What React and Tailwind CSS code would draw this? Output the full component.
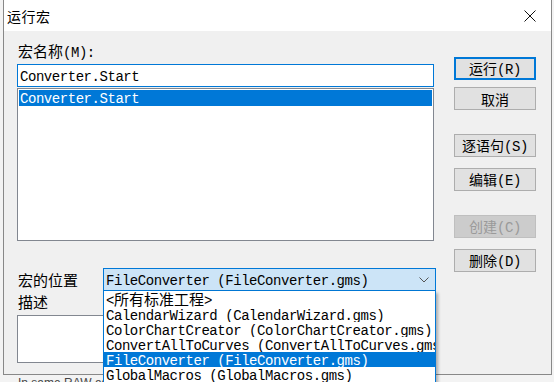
import React from "react";

const CJK_TEST = /[\u2E80-\u9FFF\u3000-\u303F\uFF00-\uFFEF]/;
const CJK_SPLIT = /([\u2E80-\u9FFF\u3000-\u303F\uFF00-\uFFEF]+)/;

function Mixed({ text, big }) {
  const parts = text.split(CJK_SPLIT).filter(Boolean);
  return (
    <span className="leading-[16px] whitespace-pre">
      {parts.map((p, i) =>
        CJK_TEST.test(p) ? (
          <span
            key={i}
            className={
              big
                ? "font-['Noto_Sans_CJK_SC',sans-serif] text-[15px]"
                : "font-['Noto_Sans_CJK_SC',sans-serif] text-[14px]"
            }
          >
            {p}
          </span>
        ) : (
          <span
            key={i}
            className="font-['Liberation_Mono','Noto_Sans_CJK_SC',monospace] text-[14px] tracking-[-0.45px]"
          >
            {p}
          </span>
        )
      )}
    </span>
  );
}

function Btn({ label, mt, primary, disabled }) {
  let cls =
    "w-[82px] h-[23px] flex items-center justify-center shrink-0 ";
  if (primary) cls += "border-2 border-[#0078d7] bg-[#e1e1e1] text-black";
  else if (disabled) cls += "border border-[#bfbfbf] bg-[#cccccc] text-[#9a9a9a]";
  else cls += "border border-[#adadad] bg-[#e1e1e1] text-black";
  return (
    <div className={cls + " " + mt}>
      <Mixed text={label} />
    </div>
  );
}

const items = [
  { t: "<所有标准工程>" },
  { t: "CalendarWizard (CalendarWizard.gms)" },
  { t: "ColorChartCreator (ColorChartCreator.gms)" },
  { t: "ConvertAllToCurves (ConvertAllToCurves.gms)" },
  { t: "FileConverter (FileConverter.gms)", sel: true },
  { t: "GlobalMacros (GlobalMacros.gms)" },
];

export default function App() {
  return (
    <div className="relative w-[554px] h-[382px] overflow-hidden bg-[#f3f3f3] text-black">
      {/* dialog */}
      <div className="ml-[3px] w-[549px] h-[375px] border-x border-b border-[#888888] flex flex-col">
        {/* title bar */}
        <div className="h-[31px] bg-white flex items-center justify-between shrink-0">
          <span className="pl-[3px] font-['Noto_Sans_CJK_SC',sans-serif] text-[14px] tracking-[0.5px] leading-[16px] mt-[1px]">
            运行宏
          </span>
          <svg width="12" height="12" viewBox="0 0 12 12" className="mr-[15px] mt-[1px]">
            <path d="M0.5 0.5 L11.5 11.5 M11.5 0.5 L0.5 11.5" stroke="#111" strokeWidth="1" fill="none" />
          </svg>
        </div>
        {/* body */}
        <div className="flex flex-1 bg-[#f0f0f0] pl-[13px]">
          <div className="w-[417px] flex flex-col shrink-0">
            <div className="mt-[13px] h-[16px] flex items-center pl-[1px]">
              <Mixed text="宏名称(M):" big />
            </div>
            <div className="mt-[4px] h-[23px] border border-[#0078d7] bg-white flex items-center pl-[2px]">
              <Mixed text="Converter.Start" />
            </div>
            <div className="mt-[1px] h-[153px] border border-[#828790] bg-white p-[1px]">
              <div className="h-[16px] bg-[#0078d7] text-white flex items-center pl-[1px]">
                <Mixed text="Converter.Start" />
              </div>
            </div>
            <div className="mt-[27px] h-[23px] flex items-center">
              <div className="w-[86px] shrink-0 pl-[1px] flex items-center">
                <Mixed text="宏的位置" big />
              </div>
              <div className="w-[333px] h-[23px] shrink-0 border border-[#0078d7] bg-[#cce4f7] flex items-center justify-between pl-[2px] pr-[6px]">
                <Mixed text="FileConverter (FileConverter.gms)" />
                <svg width="10" height="6" viewBox="0 0 10 6">
                  <path d="M0.5 0.5 L5 5 L9.5 0.5" stroke="#555" strokeWidth="1" fill="none" />
                </svg>
              </div>
            </div>
            <div className="mt-[3px] h-[16px] flex items-center pl-[1px]">
              <Mixed text="描述" big />
            </div>
            <div className="mt-[5px] h-[48px] border border-[#828790] bg-white" />
          </div>
          <div className="ml-[20px] flex flex-col">
            <Btn label="运行(R)" mt="mt-[26px]" primary />
            <Btn label="取消" mt="mt-[7px]" />
            <Btn label="逐语句(S)" mt="mt-[24px]" />
            <Btn label="编辑(E)" mt="mt-[11px]" />
            <Btn label="创建(C)" mt="mt-[24px]" disabled />
            <Btn label="删除(D)" mt="mt-[11px]" />
          </div>
        </div>
      </div>
      {/* window behind, peeking out below */}
      <div className="pl-[18px] font-['Liberation_Sans',sans-serif] text-[12px] leading-[14px] text-[#444] mt-[1px]">
        In same RAW as JPEG
      </div>

      {/* open dropdown list */}
      <div className="absolute left-[103px] top-[291px] w-[333px] h-[100px] border-x border-b border-[#0078d7] bg-white shadow-[2px_2px_3px_rgba(0,0,0,0.3)] pt-[1px]">
        {items.map((it, i) => (
          <div
            key={i}
            className={
              it.sel
                ? "h-[15px] overflow-hidden whitespace-nowrap pl-[2px] flex items-center bg-[#0078d7] text-white"
                : "h-[15px] overflow-hidden whitespace-nowrap pl-[2px] flex items-center text-black"
            }
          >
            <Mixed text={it.t} big />
          </div>
        ))}
      </div>
    </div>
  );
}
